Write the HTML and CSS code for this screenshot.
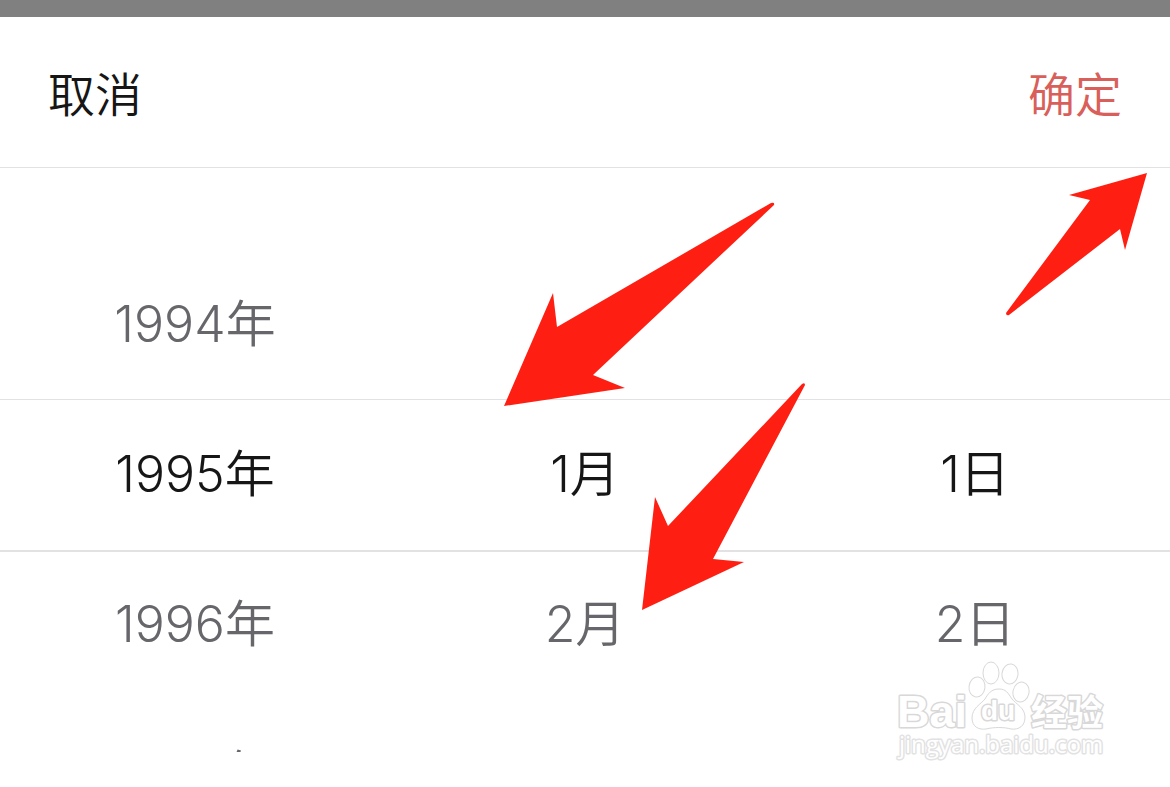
FILE: index.html
```html
<!DOCTYPE html>
<html lang="zh-CN">

<head>
  <meta charset="UTF-8">
  <meta name="viewport" content="width=device-width, initial-scale=1.0">
  <title>选择日期</title>
  <link rel="stylesheet" href="styles.css">
</head>

<body>
  <!-- 顶部遮罩 -->
  <div class="mask"></div>

  <main class="sheet">
    <!-- 操作栏 -->
    <header class="toolbar">
      <button type="button" class="cancel">取消</button>
      <button type="button" class="confirm">确定</button>
    </header>

    <!-- 日期滚轮 -->
    <div class="picker">
      <ul class="column" role="listbox" aria-label="年">
        <li role="option">1994年</li>
        <li role="option" class="selected" aria-selected="true">1995年</li>
        <li role="option">1996年</li>
        <li role="option">1997年</li>
      </ul>
      <ul class="column" role="listbox" aria-label="月">
        <li role="presentation"></li>
        <li role="option" class="selected" aria-selected="true">1月</li>
        <li role="option">2月</li>
        <li role="option">3月</li>
      </ul>
      <ul class="column" role="listbox" aria-label="日">
        <li role="presentation"></li>
        <li role="option" class="selected" aria-selected="true">1日</li>
        <li role="option">2日</li>
        <li role="option">3日</li>
      </ul>
      <div class="indicator"></div>
    </div>

    <!-- 标注箭头 -->
    <svg class="arrows" viewBox="0 0 1170 787" aria-hidden="true">
      <path d="M1147 173L1069 195L1090 200L1006 313Q1006 316 1009 315L1120 229L1125 250Z" />
      <path d="M504 406L553 293L557 327L771 203Q775 202 774 205L593 375L625 388Z" />
      <path d="M642 610L655 497L668 526L802 384Q805 382 805 385L713 559L744 562Z" />
    </svg>

    <!-- 水印 -->
    <svg class="watermark" viewBox="0 0 220 110" role="img" aria-label="Baidu经验">
      <g class="paw">
        <ellipse cx="87" cy="32" rx="8" ry="10" transform="rotate(8 87 32)" />
        <ellipse cx="101" cy="18" rx="8" ry="11" />
        <ellipse cx="120" cy="19" rx="8" ry="10" transform="rotate(8 120 19)" />
        <ellipse cx="131" cy="37" rx="8" ry="10" transform="rotate(12 131 37)" />
        <path d="M109 34C101 34 98 39 95 44C91 49 82 53 82 63C82 72 89 75 96 74C104 72 114 72 121 74C129 75 135 71 135 62C135 53 126 49 122 44C118 38 116 34 109 34Z" />
      </g>
      <text class="brand" x="7" y="72">Bai</text>
      <text class="du" x="91" y="65">du</text>
      <text class="cn" x="141" y="71">经验</text>
      <text class="url" x="9" y="98">jingyan.baidu.com</text>
    </svg>
  </main>
</body>

</html>
```
FILE: styles.css
```css
/* 全局样式 */
* {
  box-sizing: border-box;
}

body {
  margin: 0;
  background-color: #fff;
  color: #161616;
  font-family: Inter, "Noto Sans CJK SC", sans-serif;
  overflow-x: hidden;
}

.mask {
  height: 17px;
  background-color: #808080;
}

/* 操作栏样式 */
.toolbar {
  display: flex;
  justify-content: space-between;
  align-items: center;
  height: 151px;
  padding: 0 48px;
  border-bottom: 1px solid #e2e2e4;
}

.toolbar button {
  padding: 0;
  border: none;
  background: transparent;
  color: #161616;
  font-family: "Noto Sans CJK SC", sans-serif;
  font-size: 47px;
  font-weight: 350;
  line-height: 72px;
  cursor: pointer;
}

.toolbar .confirm {
  color: #d95f5b;
}

/* 日期滚轮样式 */
.picker {
  position: relative;
  display: grid;
  grid-template-columns: repeat(3, 1fr);
  height: 584px;
  padding-top: 81px;
  overflow: hidden;
}

.column {
  margin: 0;
  padding: 0;
  list-style: none;
}

.column li {
  height: 150px;
  color: #66666b;
  font-size: 50px;
  font-weight: 350;
  line-height: 150px;
  text-align: center;
  cursor: pointer;
}

.column .selected {
  color: #161616;
}

/* 选中行上下分割线 */
.indicator {
  position: absolute;
  top: 231px;
  left: 0;
  width: 100%;
  height: 153px;
  border-top: 1px solid #e2e2e4;
  border-bottom: 2px solid #e2e2e4;
  pointer-events: none;
}

/* 标注箭头样式 */
.arrows {
  position: absolute;
  top: 0;
  left: 0;
  width: 100%;
  fill: #ff1f12;
  pointer-events: none;
}

/* 水印样式 */
.watermark {
  position: absolute;
  top: 655px;
  right: 60px;
  width: 220px;
  fill: #fff;
  stroke: #d8d8d8;
  stroke-width: 1px;
  stroke-linejoin: round;
  pointer-events: none;
}

.watermark text {
  font-family: "Liberation Sans", "Noto Sans CJK SC", sans-serif;
  font-weight: bold;
  stroke-width: 3px;
  paint-order: stroke;
}

.watermark .brand {
  font-size: 45px;
}

.watermark .du {
  font-size: 28px;
}

.watermark .cn {
  font-size: 36px;
}

.watermark .url {
  font-family: "Open Sans", sans-serif;
  font-size: 24px;
  font-weight: 400;
  stroke: #e2e2e2;
}
```
